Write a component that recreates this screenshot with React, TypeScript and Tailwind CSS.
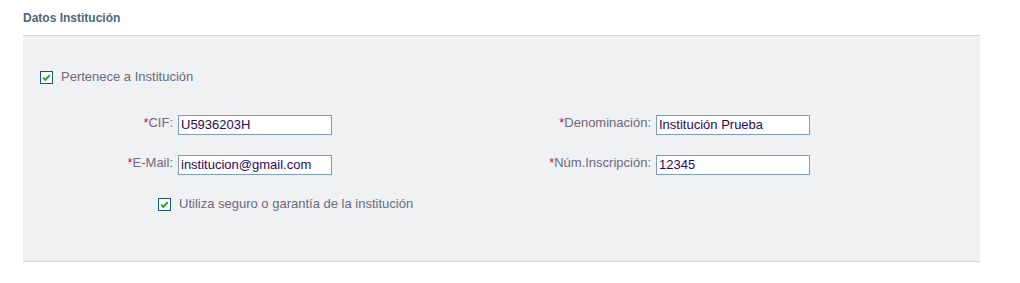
import React from "react";

function Check() {
  return (
    <span className="inline-flex h-[13px] w-[13px] shrink-0 items-center justify-center border border-[#1c5180] bg-white">
      <svg width="9" height="9" viewBox="0 0 9 9">
        <path d="M1.2 4.6 L3.4 6.8 L7.8 2.2" fill="none" stroke="#21a121" strokeWidth="1.9" />
      </svg>
    </span>
  );
}

function Field({ label, value, labelW }: { label: string; value: string; labelW: string }) {
  return (
    <div className="flex h-[20px] items-start">
      <div className={`${labelW} text-right text-[13px] leading-[16px] text-[#6a6a7c]`}>
        <span className="text-[#e01010]">*</span>
        {label}
      </div>
      <div className="ml-[5px] flex h-[20px] w-[154px] items-center border border-[#7f9db9] bg-white px-[2px] text-[13px] leading-[16px] text-[#2a0a50]">
        {value}
      </div>
    </div>
  );
}

export default function App() {
  return (
    <div className="h-[283px] w-[1020px] bg-white font-['Liberation_Sans',Arial,sans-serif]">
      <div className="pl-[23px] pt-[11px]">
        <div className="h-[24px] text-[12px] font-bold leading-[14px] text-[#4e6577]">Datos Institución</div>
      </div>
      <div className="ml-[23px] h-[227px] w-[957px] border-t border-b border-[#d2d6da] bg-[#f0f1f3]">
        <div className="mt-[33px] flex h-[16px] items-center gap-[8px] pl-[17px]">
          <Check />
          <span className="text-[13px] leading-[16px] text-[#6a6a7c]">Pertenece a Institución</span>
        </div>
        <div className="mt-[30px] flex">
          <div className="flex flex-col gap-[20px]">
            <Field label="CIF:" value="U5936203H" labelW="w-[150px]" />
            <Field label="E-Mail:" value="institucion@gmail.com" labelW="w-[150px]" />
          </div>
          <div className="flex flex-col gap-[20px]">
            <Field label="Denominación:" value="Institución Prueba" labelW="w-[319px]" />
            <Field label="Núm.Inscripción:" value="12345" labelW="w-[319px]" />
          </div>
        </div>
        <div className="mt-[21px] flex h-[16px] items-center gap-[8px] pl-[135px]">
          <Check />
          <span className="text-[13px] leading-[16px] text-[#6a6a7c]">Utiliza seguro o garantía de la institución</span>
        </div>
      </div>
    </div>
  );
}
